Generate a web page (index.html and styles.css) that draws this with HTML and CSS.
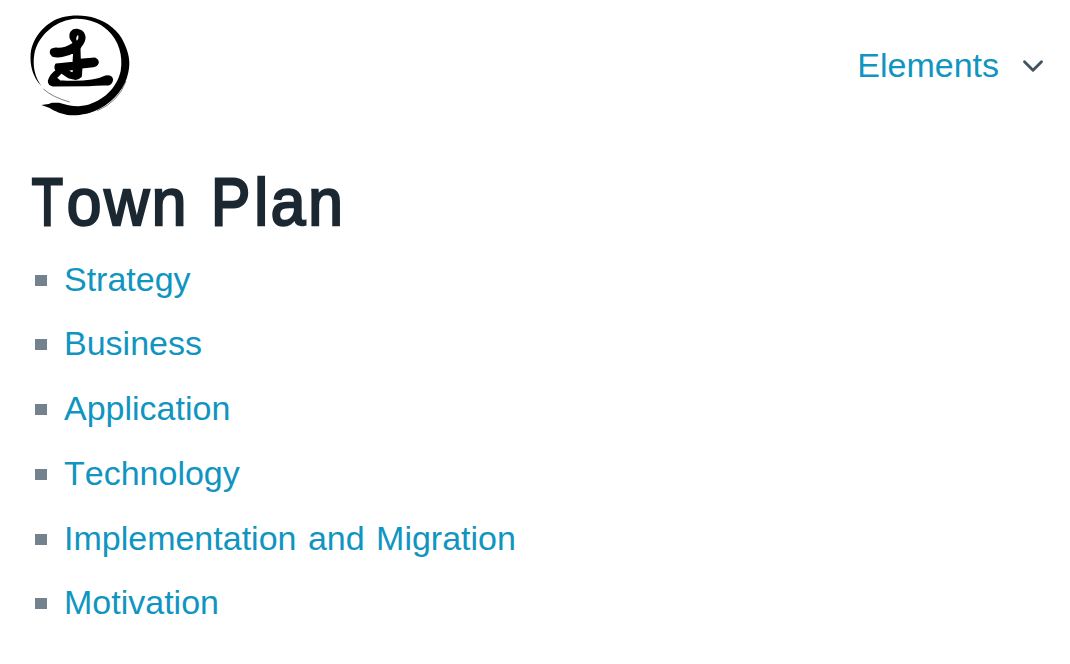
FILE: index.html
```html
<!DOCTYPE html>
<html lang="en">
<head>
<meta charset="utf-8">
<title>Town Plan</title>
<link rel="stylesheet" href="styles.css">
</head>
<body>
<header class="nav">
  <a class="logo" href="#" aria-label="Home">
    <svg viewBox="30 30 300 303" width="100" height="101">
      <path d="M64 243C38 216 29 181 32 145C38 96 78 50 127 37C156 30 196 29 226 40C263 52 296 77 312 113C327 146 332 171 325 202C316 248 284 287 241 310C212 326 182 332 151 331C128 329 104 319 89 309L64 300L86 297L96 293L117 293C142 301 172 307 198 301C247 288 290 252 302 198C310 153 296 106 263 76C237 50 193 38 158 42C102 50 53 94 43 148C37 184 45 217 64 243Z"/>
      <path class="hair" d="M70 252Q98 277 149 291M232 317Q296 290 318 228"/>
      <path class="glyph" fill-rule="evenodd" d="M152 101C147 82 157 73 171 74C194 77 200 98 188 116Q181 125 179 131L180 164L224 160Q234 164 234 173Q230 183 220 184L185 188L183 214Q173 224 164 222L145 217L124 203L108 219L119 228Q171 233 216 226Q238 224 257 214Q274 211 277 224Q275 236 265 239Q237 238 205 241L99 242Q86 240 86 228Q91 209 109 197Q103 187 108 178L160 173L162 141Q148 149 132 152Q113 158 98 153Q88 144 94 134Q102 128 116 131Q137 130 154 119L161 115ZM169 92Q163 102 170 112Q180 102 178 92Q173 85 169 92ZM139 196L160 206L161 192Z"/>
    </svg>
  </a>
  <a class="menu" href="#"><span>Elements</span>
    <svg class="chevron" viewBox="0 0 24 24" width="34" height="34"><path d="M6 9l6 6 6-6"/></svg>
  </a>
</header>
<main>
  <h1><span class="title"><span class="cap cap-t">T</span>own <span class="cap cap-p">P</span>lan</span></h1>
  <ul class="list">
    <li><a href="#">Strategy</a></li>
    <li><a href="#">Business</a></li>
    <li><a href="#">Application</a></li>
    <li><a href="#">Technology</a></li>
    <li><a href="#">Implementation and Migration</a></li>
    <li><a href="#">Motivation</a></li>
  </ul>
</main>
</body>
</html>
```
FILE: styles.css
```css
body { margin: 0; background: #fff; font: 34px/51px "Liberation Sans", Arial, sans-serif; font-kerning: none; word-spacing: 2px; color: #415462; }
a { color: #1095c1; text-decoration: none; }
.nav { display: flex; justify-content: space-between; align-items: center; height: 131px; padding: 0 20px 0 30px; }
.logo, .logo svg { display: block; overflow: visible; }
.hair { fill: none; stroke: #000; stroke-width: 1.5; }
.glyph { stroke: #000; stroke-width: 5; stroke-linejoin: round; }
.menu { display: flex; align-items: center; gap: 17px; }
.chevron { fill: none; stroke: #415462; stroke-width: 2; stroke-linecap: round; stroke-linejoin: round; }
main { padding: 29px 30px 0; }
h1 { margin: 0; font-weight: 400; font-size: 67px; line-height: 84px; letter-spacing: 2.9px; word-spacing: 0; color: #1b2832; -webkit-text-stroke: 2.4px #1b2832; }
.title { display: inline-block; transform: scaleX(.93); transform-origin: left; }
.cap { display: inline-block; letter-spacing: 0; transform-origin: left; -webkit-text-stroke-width: 2.8px; }
.cap-t { width: 39.6px; transform: translateX(2px) scaleX(.82); }
.cap-p { width: 48.5px; transform: translateX(2px) scaleX(.935); }
.list { margin: 0; padding: 10px 0 0 34px; list-style: none; }
.list li { display: flex; align-items: center; height: 51px; margin-bottom: 13.7px; }
.list li:first-child { margin-bottom: 13px; }
.list li:nth-child(2) { margin-bottom: 14.4px; }
.list li::before { content: ""; width: 12px; height: 11px; margin: 2px 17px 0 -29px; background: #73828c; }
```
